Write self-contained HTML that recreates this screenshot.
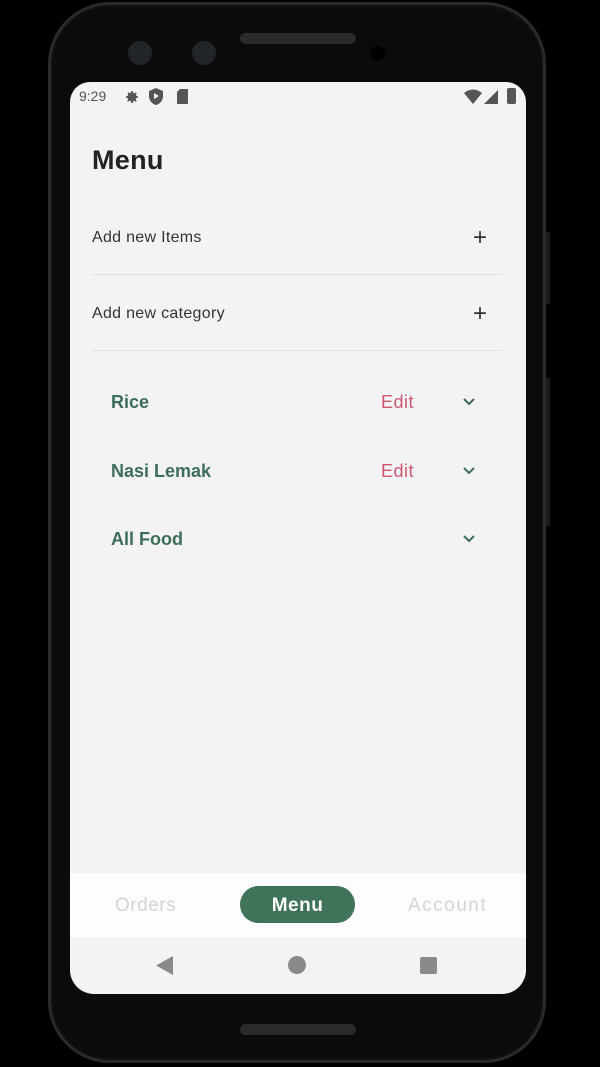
<!DOCTYPE html>
<html><head><meta charset="utf-8"><style>
*{margin:0;padding:0;box-sizing:border-box}
body{width:600px;height:1067px;background:#000;position:relative;overflow:hidden;font-family:"Liberation Sans",sans-serif}
.phone{position:absolute;left:48px;top:2px;width:498px;height:1061px;border-radius:62px;background:#0b0a0d;border:3px solid #2a2a2c;box-shadow:inset 0 0 0 2px #111}
.screen{position:absolute;left:70px;top:82px;width:456px;height:912px;background:#f3f2f4;border-radius:20px 20px 24px 24px;overflow:hidden}
.abs{position:absolute}
.t{position:absolute;white-space:nowrap}
</style></head><body>
<div class="phone"></div>
<div class="abs" style="left:240px;top:33px;width:116px;height:11px;border-radius:6px;background:#2a2a2c"></div>
<div class="abs" style="left:128px;top:41px;width:24px;height:24px;border-radius:50%;background:#222527"></div>
<div class="abs" style="left:192px;top:41px;width:24px;height:24px;border-radius:50%;background:#222527"></div>
<div class="abs" style="left:370px;top:46px;width:15px;height:15px;border-radius:50%;background:#000"></div>
<div class="abs" style="left:240px;top:1024px;width:116px;height:11px;border-radius:6px;background:#2a2a2c"></div>
<div class="abs" style="left:546px;top:232px;width:4px;height:72px;background:#1c1c1e"></div>
<div class="abs" style="left:546px;top:378px;width:4px;height:148px;background:#1c1c1e"></div>
<div class="screen">
 <div class="t" style="left:9px;top:6px;font-size:14px;color:#555">9:29</div>
 <svg class="abs" style="left:54px;top:7px" width="16" height="16" viewBox="0 0 24 24"><path fill="#555" d="M12 8a4 4 0 100 8 4 4 0 000-8zm9 5v-2l-2.5-.6-.7-1.7 1.4-2.2-1.4-1.4-2.2 1.4-1.7-.7L13 3h-2l-.6 2.5-1.7.7-2.2-1.4-1.4 1.4 1.4 2.2-.7 1.7L3 11v2l2.5.6.7 1.7-1.4 2.2 1.4 1.4 2.2-1.4 1.7.7L11 21h2l.6-2.5 1.7-.7 2.2 1.4 1.4-1.4-1.4-2.2.7-1.7z"/></svg>
 <svg class="abs" style="left:79px;top:6px" width="14" height="17" viewBox="0 0 14 17"><path fill="#555" d="M7 0L0 3v5c0 4.5 3 8 7 9 4-1 7-4.5 7-9V3z"/><path fill="#f3f2f4" d="M5 5v6l5-3z"/></svg>
 <svg class="abs" style="left:107px;top:7px" width="11" height="15" viewBox="0 0 11 15"><path fill="#555" d="M3 0h7a1 1 0 011 1v13a1 1 0 01-1 1H1a1 1 0 01-1-1V3z"/></svg>
 <svg class="abs" style="left:394px;top:7px" width="18" height="15" viewBox="0 0 18 15"><path fill="#555" d="M0 4Q9-3 18 4L9 15z"/></svg>
 <svg class="abs" style="left:414px;top:8px" width="14" height="14" viewBox="0 0 14 14"><path fill="#555" d="M14 0v14H0z"/></svg>
 <div class="abs" style="left:437px;top:6px;width:9px;height:16px;background:#555;border-radius:2px"></div>

 <div class="t" style="left:22px;top:63px;font-size:27px;font-weight:bold;color:#222;letter-spacing:0.3px">Menu</div>
 <div class="t" style="left:22px;top:147px;font-size:16px;color:#333;letter-spacing:0.3px">Add new Items</div>
 <div class="t" style="left:403px;top:142px;font-size:24px;color:#333;font-weight:300">+</div>
 <div class="abs" style="left:22px;top:192px;width:410px;height:1px;background:#e2e1e4"></div>
 <div class="t" style="left:22px;top:223px;font-size:16px;color:#333;letter-spacing:0.3px">Add new category</div>
 <div class="t" style="left:403px;top:218px;font-size:24px;color:#333;font-weight:300">+</div>
 <div class="abs" style="left:22px;top:268px;width:410px;height:1px;background:#e2e1e4"></div>

 <div class="t" style="left:41px;top:310px;font-size:18px;font-weight:bold;color:#3d6e57">Rice</div>
 <div class="t" style="left:311px;top:310px;font-size:18px;color:#cc5a6e;letter-spacing:0.5px">Edit</div>
 <svg class="abs" style="left:392px;top:315px" width="14" height="10" viewBox="0 0 14 10"><path d="M2 2l5 5 5-5" stroke="#3d6e57" stroke-width="2" fill="none"/></svg>
 <div class="t" style="left:41px;top:379px;font-size:18px;font-weight:bold;color:#3d6e57">Nasi Lemak</div>
 <div class="t" style="left:311px;top:379px;font-size:18px;color:#cc5a6e;letter-spacing:0.5px">Edit</div>
 <svg class="abs" style="left:392px;top:384px" width="14" height="10" viewBox="0 0 14 10"><path d="M2 2l5 5 5-5" stroke="#3d6e57" stroke-width="2" fill="none"/></svg>
 <div class="t" style="left:41px;top:447px;font-size:18px;font-weight:bold;color:#3d6e57">All Food</div>
 <svg class="abs" style="left:392px;top:452px" width="14" height="10" viewBox="0 0 14 10"><path d="M2 2l5 5 5-5" stroke="#3d6e57" stroke-width="2" fill="none"/></svg>

 <div class="abs" style="left:0;top:791px;width:456px;height:64px;background:#fdfcfe"></div>
 <div class="t" style="left:45px;top:813px;font-size:19px;color:#d4d4d4;letter-spacing:0.5px">Orders</div>
 <div class="abs" style="left:170px;top:804px;width:115px;height:37px;border-radius:19px;background:#3f735a"></div>
 <div class="t" style="left:170px;top:813px;width:115px;text-align:center;font-size:19px;font-weight:bold;color:#fff;letter-spacing:0.5px">Menu</div>
 <div class="t" style="left:338px;top:813px;font-size:19px;color:#d4d4d4;letter-spacing:1.5px">Account</div>

 <svg class="abs" style="left:86px;top:874px" width="18" height="19" viewBox="0 0 18 19"><path fill="#8a8a8a" d="M17 0v19L0 9.5z"/></svg>
 <div class="abs" style="left:218px;top:874px;width:18px;height:18px;border-radius:50%;background:#8a8a8a"></div>
 <div class="abs" style="left:350px;top:875px;width:17px;height:17px;border-radius:2px;background:#8a8a8a"></div>
</div>
</body></html>
